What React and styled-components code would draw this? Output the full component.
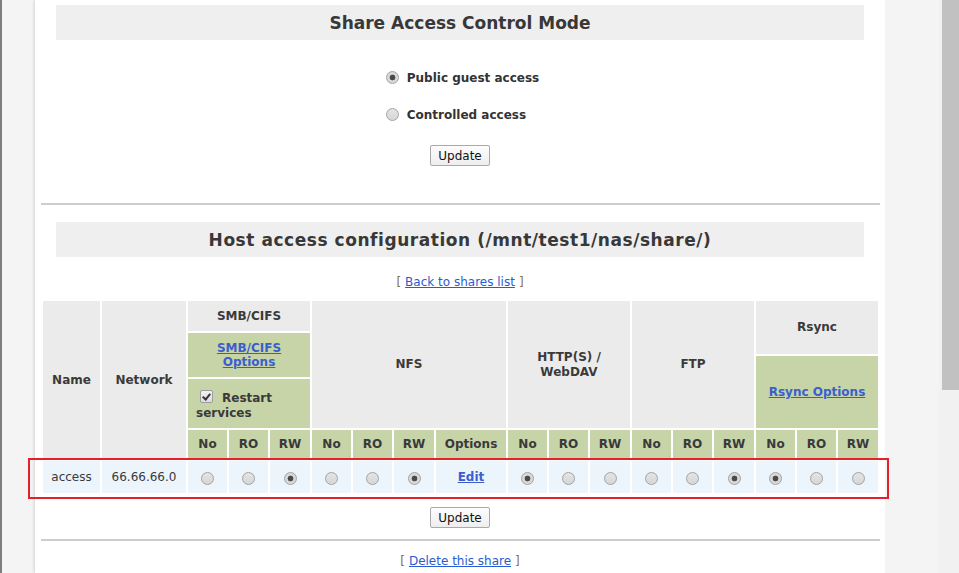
import React from 'react';
import styled, { createGlobalStyle } from 'styled-components';

const GlobalStyle = createGlobalStyle`
  html, body {
    margin: 0;
    padding: 0;
    background: #f4f4f4;
    font-family: "DejaVu Sans", Verdana, sans-serif;
    font-size: 12px;
    color: #333;
  }
`;

const Screen = styled.div`
  display: flex;
  height: 573px;
  overflow: hidden;
`;

const Gutter = styled.div`
  width: 33px;
  border-left: 2px solid #7d7d7d;
  background: #f4f4f4;
`;

const Panel = styled.main`
  width: 850px;
  background: #fff;
  box-shadow: -1px 0 3px rgba(0, 0, 0, 0.12), 1px 0 2px rgba(0, 0, 0, 0.06);
  padding-top: 5px;
  display: flex;
  flex-direction: column;
`;

const Side = styled.div`
  flex: 1;
  background: #f4f4f4;
`;

const ScrollTrack = styled.div`
  width: 20px;
  background: #f1f1f1;
  display: flex;
  justify-content: center;
`;

const ScrollThumb = styled.div`
  width: 17px;
  height: 390px;
  margin-left: 2px;
  background: #c1c1c1;
`;

const SectionTitle = styled.h2`
  margin: ${p => p.$top || 0}px 21px 0;
  height: 35px;
  padding-top: 1px;
  box-sizing: border-box;
  background: #efefef;
  display: flex;
  align-items: center;
  justify-content: center;
  font-size: 17px;
  font-weight: bold;
  letter-spacing: ${p => p.$spacing || 0}px;
  color: #383838;
`;

const RadioGroup = styled.div`
  align-self: center;
  display: flex;
  flex-direction: column;
  gap: 20px;
  margin-top: 29px;
  margin-left: 5px;
`;

const RadioLine = styled.label`
  display: flex;
  align-items: center;
  gap: 8px;
  font-weight: bold;
  height: 17px;
`;

const Radio = styled.span`
  display: inline-block;
  flex: none;
  width: 11px;
  height: 11px;
  border-radius: 50%;
  border: 1px solid #a3a3a3;
  background: ${p =>
    p.$checked
      ? 'radial-gradient(circle, #4a4a4a 0 2.6px, #d8d8d8 3.2px)'
      : 'linear-gradient(#e4e4e4, #d6d6d6)'};
  margin-top: ${p => p.$drop || 0}px;
`;

const Button = styled.button`
  align-self: center;
  width: 60px;
  height: 21px;
  margin-top: ${p => p.$top}px;
  padding: 0;
  border: 1px solid #a9a9a9;
  border-radius: 2px;
  background: linear-gradient(#fdfdfd, #eeeeee);
  font-family: "DejaVu Sans", Verdana, sans-serif;
  font-size: 12px;
  color: #111;
`;

const Rule = styled.hr`
  margin: ${p => p.$top}px 5px 0 6px;
  border: 0;
  border-top: 2px solid #cdcdcd;
  height: 0;
`;

const LinkLine = styled.div`
  align-self: center;
  margin-top: ${p => p.$top}px;
  height: 16px;
  line-height: 16px;
  color: #8a6d45;
`;

const Link = styled.a`
  color: #2a5bd0;
  text-decoration: underline;
  margin: 0 4px;
`;

const TableWrap = styled.div`
  position: relative;
  margin: 11px 7px 0 8px;
`;

const cols = [57, 84, 39, 39, 40, 39, 39, 40, 70, 39, 39, 40, 39, 39, 40, 39, 39, 40];

const Grid = styled.div`
  display: grid;
  grid-template-columns: ${cols.map(c => c + 'px').join(' ')};
  grid-template-rows: 30px 44px 49px 29px 32px;
  gap: 2px;
`;

const tones = {
  gray: '#ebebeb',
  green: '#c6d4a8',
  blue: '#ecf4fc',
};

const Cell = styled.div`
  grid-column: ${p => p.$col};
  grid-row: ${p => p.$row};
  background: ${p => tones[p.$tone]};
  display: flex;
  align-items: center;
  justify-content: center;
  text-align: center;
  font-weight: ${p => (p.$plain ? 'normal' : 'bold')};
  line-height: 15px;
  color: #3a3a3a;
`;

const RestartCell = styled(Cell)`
  display: block;
  text-align: left;
  padding: 11px 8px 0;
`;

const Check = styled.span`
  display: inline-block;
  width: 11px;
  height: 11px;
  border: 1px solid #9c9c9c;
  border-radius: 2px;
  background: linear-gradient(#f2f2f2, #dcdcdc);
  margin: 0 9px 0 4px;
  vertical-align: -1px;
  position: relative;
  &::after {
    content: '';
    position: absolute;
    left: 3px;
    top: 1px;
    width: 3px;
    height: 6px;
    border: solid #333;
    border-width: 0 2px 2px 0;
    transform: rotate(40deg);
  }
`;

const Stack = styled.div`
  grid-column: ${p => p.$col};
  grid-row: ${p => p.$row};
  display: flex;
  flex-direction: column;
  gap: 2px;
`;

const StackPart = styled(Cell)`
  height: ${p => (p.$h ? p.$h + 'px' : 'auto')};
  flex: ${p => (p.$h ? 'none' : 1)};
`;

const TableLink = styled.a`
  color: #3a5fcd;
  text-decoration: underline;
  font-weight: bold;
  line-height: 14px;
`;

const Highlight = styled.div`
  position: absolute;
  left: -15px;
  top: 157px;
  width: 857px;
  height: 37px;
  border: 2px solid #e3202b;
  pointer-events: none;
`;

const groups = [
  { start: 3, names: ['No', 'RO', 'RW'], checked: 2 },
  { start: 6, names: ['No', 'RO', 'RW', 'Options'], checked: 2 },
  { start: 10, names: ['No', 'RO', 'RW'], checked: 0 },
  { start: 13, names: ['No', 'RO', 'RW'], checked: 2 },
  { start: 16, names: ['No', 'RO', 'RW'], checked: 0 },
];

const HostTable = () => (
  <TableWrap>
    <Grid>
      <Cell $col="1" $row="1 / 5" $tone="gray">Name</Cell>
      <Cell $col="2" $row="1 / 5" $tone="gray">Network</Cell>
      <Cell $col="3 / 6" $row="1" $tone="gray">SMB/CIFS</Cell>
      <Cell $col="3 / 6" $row="2" $tone="green">
        <TableLink href="#">SMB/CIFS<br />Options</TableLink>
      </Cell>
      <RestartCell $col="3 / 6" $row="3" $tone="green">
        <Check />Restart services
      </RestartCell>
      <Cell $col="6 / 10" $row="1 / 4" $tone="gray">NFS</Cell>
      <Cell $col="10 / 13" $row="1 / 4" $tone="gray">HTTP(S) /<br />WebDAV</Cell>
      <Cell $col="13 / 16" $row="1 / 4" $tone="gray">FTP</Cell>
      <Stack $col="16 / 19" $row="1 / 4">
        <StackPart $tone="gray" $h={53}>Rsync</StackPart>
        <StackPart $tone="green">
          <TableLink href="#">Rsync Options</TableLink>
        </StackPart>
      </Stack>

      {groups.map(g =>
        g.names.map((n, i) => (
          <Cell key={`h${g.start}-${i}`} $col={`${g.start + i}`} $row="4" $tone="green">
            {n}
          </Cell>
        ))
      )}

      <Cell $col="1" $row="5" $tone="blue" $plain>access</Cell>
      <Cell $col="2" $row="5" $tone="blue" $plain>66.66.66.0</Cell>
      {groups.map(g =>
        g.names.map((n, i) => (
          <Cell key={`d${g.start}-${i}`} $col={`${g.start + i}`} $row="5" $tone="blue">
            {n === 'Options' ? (
              <TableLink href="#">Edit</TableLink>
            ) : (
              <Radio $checked={i === g.checked} $drop={3} />
            )}
          </Cell>
        ))
      )}
    </Grid>
    <Highlight />
  </TableWrap>
);

export default function App() {
  return (
    <>
      <GlobalStyle />
      <Screen>
        <Gutter />
        <Panel>
          <SectionTitle>Share Access Control Mode</SectionTitle>
          <RadioGroup>
            <RadioLine><Radio $checked />Public guest access</RadioLine>
            <RadioLine><Radio />Controlled access</RadioLine>
          </RadioGroup>
          <Button $top={22}>Update</Button>
          <Rule $top={37} />
          <SectionTitle $top={17} $spacing={0.55}>Host access configuration (/mnt/test1/nas/share/)</SectionTitle>
          <LinkLine $top={17}>
            [<Link href="#">Back to shares list</Link>]
          </LinkLine>
          <HostTable />
          <Button $top={14}>Update</Button>
          <Rule $top={11} />
          <LinkLine $top={12}>
            [<Link href="#">Delete this share</Link>]
          </LinkLine>
        </Panel>
        <Side />
        <ScrollTrack>
          <ScrollThumb />
        </ScrollTrack>
      </Screen>
    </>
  );
}
